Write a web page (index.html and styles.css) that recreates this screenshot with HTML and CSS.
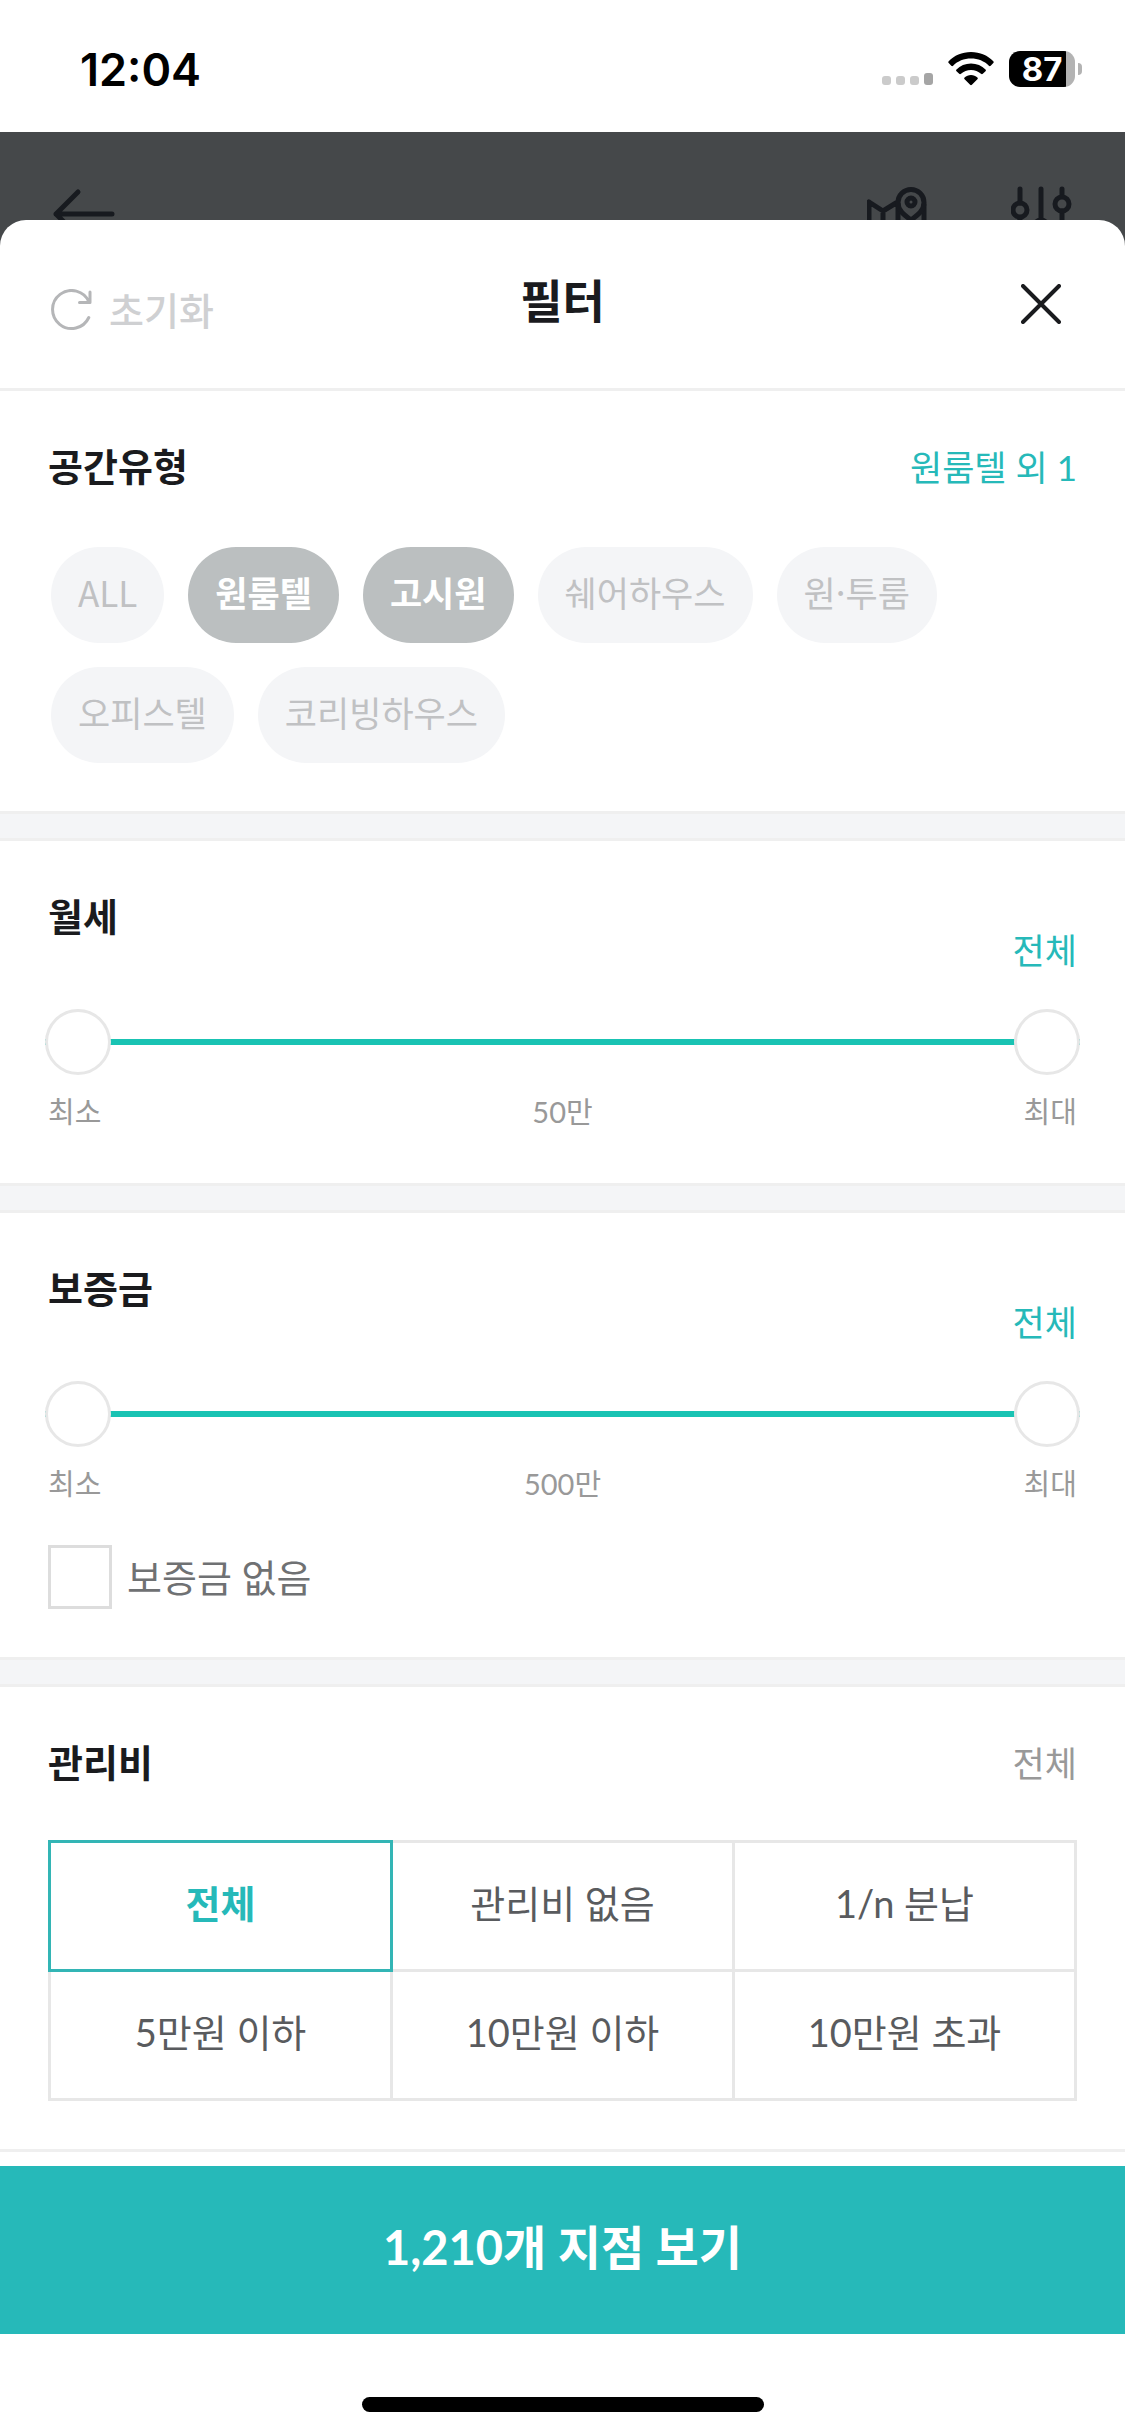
FILE: index.html
```
<!DOCTYPE html>
<html lang="ko">
<head>
  <meta charset="UTF-8" />
  <meta name="viewport" content="width=device-width, initial-scale=1.0"/>
  <title>필터</title>
  <link rel="stylesheet" href="styles.css">
</head>

<body>

  <!-- Phone status bar -->
  <div class="status-bar">
    <span class="time">12:04</span>
    <div class="status-icons">
      <svg class="signal" width="51" height="12" viewBox="0 0 51 12">
        <g fill="#cbcbcb">
          <rect x="0" y="3" width="9" height="9" rx="3"/>
          <rect x="14" y="3" width="9" height="9" rx="3"/>
          <rect x="28" y="3" width="9" height="9" rx="3"/>
        </g>
        <rect x="42" y="0" width="9" height="12" rx="3" fill="#a5a5a5"/>
      </svg>
      <svg class="wifi" width="46" height="34" viewBox="0 0 46 34">
        <path d="M23 0C32 0 40 3.500 45.300 9.300c.6.6.6 1.200 0 1.800l-2.600 2.600c-.6.6-1.200.6-1.800 0C36.300 9.200 30 6.600 23 6.600S9.700 9.200 5.100 13.700c-.6.6-1.200.6-1.800 0L.7 11.100c-.6-.6-.6-1.200 0-1.800C6 3.500 14 0 23 0z"/>
        <path d="M23 11.600c5.700 0 10.800 2.200 14.500 5.800.6.6.6 1.200 0 1.800l-2.700 2.600c-.6.6-1.200.5-1.800 0-2.700-2.400-6.100-3.800-10-3.800s-7.300 1.400-10 3.800c-.6.5-1.200.6-1.800 0l-2.700-2.600c-.6-.6-.6-1.200 0-1.800 3.700-3.600 8.800-5.800 14.500-5.800z"/>
        <path d="M23 23.100c2.500 0 4.700.9 6.400 2.400.6.6.6 1.200 0 1.800l-5.500 5.500c-.6.6-1.200.6-1.800 0l-5.500-5.500c-.6-.6-.6-1.200 0-1.800 1.700-1.500 3.900-2.400 6.400-2.400z"/>
      </svg>
      <div class="battery">
        <span class="battery-level">87</span>
        <span class="battery-nub"></span>
      </div>
    </div>
  </div>

  <!-- Page behind the sheet, dimmed -->
  <div class="app-bar">
    <svg class="icon-back" width="64" height="52" viewBox="0 0 64 52">
      <path d="M26 4L4 26l22 22M4 26h56"/>
    </svg>
    <div class="app-actions">
      <svg width="62" height="58" viewBox="0 0 62 58">
        <path d="M2 17v34l14 5 14-5 13 5 14-5V20M2 17l14 9 13-8M16 26v29M31 19v32M44 38v18"/>
        <path d="M44 35C36 29 31 25 31 17.500a13 13 0 0 1 26 0c0 7.500-5 11.500-13 17.500z"/>
        <circle cx="44" cy="17" r="4"/>
      </svg>
      <svg width="62" height="58" viewBox="0 0 62 58">
        <path d="M9 4v14M9 33v22M30 4v31M30 49v6M51 4v7M51 26v29"/>
        <circle cx="9" cy="25" r="7"/>
        <circle cx="30" cy="42" r="7"/>
        <circle cx="51" cy="19" r="7"/>
      </svg>
    </div>
  </div>

  <main class="sheet">
    <header class="sheet-header">
      <button class="reset" type="button">
        <svg width="42" height="42" viewBox="0 0 42 42">
          <path d="M37.800 28.500A19 19 0 1 1 38 13M39 3v10.500H28.500"/>
        </svg>
        초기화
      </button>
      <h1>필터</h1>
      <button class="close" type="button" aria-label="닫기">
        <svg width="40" height="40" viewBox="0 0 40 40">
          <path d="M2 2l36 36M38 2L2 38"/>
        </svg>
      </button>
    </header>

    <section>
      <div class="section-head">
        <h2>공간유형</h2>
        <span class="value">원룸텔 외 1</span>
      </div>
      <div class="chips">
        <button class="chip" type="button">ALL</button>
        <button class="chip active" type="button">원룸텔</button>
        <button class="chip active" type="button">고시원</button>
        <button class="chip" type="button">쉐어하우스</button>
        <button class="chip" type="button">원·투룸</button>
        <button class="chip" type="button">오피스텔</button>
        <button class="chip" type="button">코리빙하우스</button>
      </div>
    </section>

    <section>
      <div class="section-head range-head">
        <h2>월세</h2>
        <span class="value">전체</span>
      </div>
      <div class="range">
        <input type="range" min="0" max="100" value="0" aria-label="월세 최소">
        <input type="range" min="0" max="100" value="100" aria-label="월세 최대">
      </div>
      <div class="range-labels">
        <span>최소</span>
        <span>50만</span>
        <span>최대</span>
      </div>
    </section>

    <section>
      <div class="section-head range-head">
        <h2>보증금</h2>
        <span class="value">전체</span>
      </div>
      <div class="range">
        <input type="range" min="0" max="1000" value="0" aria-label="보증금 최소">
        <input type="range" min="0" max="1000" value="1000" aria-label="보증금 최대">
      </div>
      <div class="range-labels">
        <span>최소</span>
        <span>500만</span>
        <span>최대</span>
      </div>
      <label class="check">
        <input type="checkbox">
        보증금 없음
      </label>
    </section>

    <section>
      <div class="section-head">
        <h2>관리비</h2>
        <span class="value muted">전체</span>
      </div>
      <div class="fees">
        <button class="fee active" type="button">전체</button>
        <button class="fee" type="button">관리비 없음</button>
        <button class="fee" type="button">1/n 분납</button>
        <button class="fee" type="button">5만원 이하</button>
        <button class="fee" type="button">10만원 이하</button>
        <button class="fee" type="button">10만원 초과</button>
      </div>
    </section>
  </main>

  <button class="submit" type="button">1,210개 지점 보기</button>

  <div class="home-indicator"></div>

</body>
</html>
```
FILE: styles.css
```
* {
  margin: 0;
  padding: 0;
  box-sizing: border-box;
}

body {
  font-family: "Lato", "Noto Sans CJK KR", sans-serif;
  background-color: #fff;
  color: #1a1b1e;
}

button {
  font-family: inherit;
  border: none;
  background: none;
  cursor: pointer;
}

svg {
  display: block;
}

/* Status bar */
.status-bar {
  display: flex;
  justify-content: space-between;
  align-items: center;
  height: 132px;
  padding: 6px 43px 0 80px;
  font-family: "Inter", sans-serif;
  color: #000;
}

.time {
  font-size: 45px;
  font-weight: 600;
}

.status-icons {
  display: flex;
  align-items: center;
}

.signal {
  margin-top: 20px;
  margin-right: 15px;
}

.wifi {
  margin-right: 15px;
}

.battery {
  display: flex;
  align-items: center;
  gap: 3px;
}

.battery-level {
  width: 66px;
  height: 36px;
  border-radius: 11px;
  background: linear-gradient(to right, #000 57px, #b3b3b3 57px);
  color: #fff;
  font-size: 33px;
  font-weight: 700;
  line-height: 36px;
  text-align: center;
}

.battery-nub {
  width: 4px;
  height: 12px;
  border-radius: 0 6px 6px 0;
  background-color: #b3b3b3;
}

/* Dimmed app bar */
.app-bar {
  display: flex;
  justify-content: space-between;
  align-items: center;
  height: 164px;
  padding: 0 52px;
  background-color: #45484a;
}

.app-bar svg {
  fill: none;
  stroke: #171a1f;
  stroke-width: 5;
  stroke-linecap: round;
  stroke-linejoin: round;
}

.app-actions {
  display: flex;
  gap: 82px;
}

/* Filter sheet */
.sheet {
  position: relative;
  margin-top: -76px;
  border-radius: 26px 26px 0 0;
  background-color: #fff;
}

.sheet-header {
  display: grid;
  grid-template-columns: 1fr auto 1fr;
  align-items: center;
  height: 171px;
  padding: 0 48px;
  border-bottom: 3px solid #efefef;
}

.sheet-header h1 {
  padding-bottom: 6px;
  font-size: 46px;
  font-weight: 700;
  line-height: 64px;
}

.reset {
  display: flex;
  align-items: center;
  gap: 16px;
  padding: 12px 0 0 3px;
  color: #cfd0d2;
  font-size: 38px;
  font-weight: 500;
  line-height: 56px;
}

.reset svg {
  fill: none;
  stroke: #b5b6b8;
  stroke-width: 3;
  stroke-linecap: round;
  stroke-linejoin: round;
}

.close {
  justify-self: end;
  padding: 0 16px;
}

.close svg {
  fill: none;
  stroke: #1a1b1e;
  stroke-width: 4;
  stroke-linecap: round;
}

section {
  padding: 48px 48px;
  border-bottom: 3px solid #efefef;
}

/* Grey band between sections, with a hairline on both edges */
section + section {
  padding-top: 51px;
  border-top: 24px solid #f4f5f7;
  box-shadow: inset 0 3px #efefef;
}

.section-head {
  display: flex;
  justify-content: space-between;
  align-items: flex-start;
}

.section-head h2 {
  font-size: 38px;
  font-weight: 700;
  line-height: 54px;
}

.value {
  color: #26b9b9;
  font-size: 35px;
  line-height: 56px;
}

.value.muted {
  color: #999;
}

/* Space type chips */
.chips {
  display: flex;
  flex-wrap: wrap;
  gap: 24px;
  margin-top: 52px;
  padding: 0 3px;
}

.chip {
  height: 96px;
  padding: 0 27px 8px;
  border-radius: 48px;
  background-color: #f4f5f7;
  color: #c0c1c3;
  font-family: "Noto Sans CJK KR", sans-serif;
  font-size: 35px;
}

.chip.active {
  background-color: #bbbfc0;
  color: #fff;
  font-weight: 700;
}

/* Price sliders */
.range-head {
  height: 120px;
}

.range-head .value {
  margin-top: 33px;
}

.range {
  display: grid;
  align-items: center;
  margin: 0 -3px;
}

.range::before {
  content: "";
  grid-area: 1 / 1;
  height: 6px;
  background-color: #19c3b3;
}

.range input {
  grid-area: 1 / 1;
  position: relative;
  width: 100%;
  height: 66px;
  appearance: none;
  background: none;
  pointer-events: none;
}

.range input::-webkit-slider-thumb {
  appearance: none;
  width: 66px;
  height: 66px;
  border: 3px solid #e7e7e7;
  border-radius: 50%;
  background-color: #fff;
  pointer-events: auto;
  cursor: pointer;
}

.range-labels {
  display: flex;
  justify-content: space-between;
  margin-top: 14px;
  color: #999;
  font-size: 29px;
  line-height: 46px;
}

.check {
  display: flex;
  align-items: center;
  gap: 15px;
  margin-top: 38px;
  color: #6f7173;
  font-size: 38px;
  line-height: 56px;
}

.check input {
  width: 64px;
  height: 64px;
  appearance: none;
  border: 3px solid #ddd;
  background-color: #fff;
}

/* Maintenance fee grid, neighbours share a border */
.fees {
  display: grid;
  grid-template-columns: repeat(3, 1fr);
  margin-top: 49px;
  padding: 0 3px 3px 0;
}

.fee {
  height: 132px;
  margin: 0 -3px -3px 0;
  padding-bottom: 10px;
  border: 3px solid #e7e7e7;
  color: #595b5e;
  font-size: 38px;
}

.fee.active {
  position: relative;
  border-color: #33b5b5;
  color: #26b9b9;
  font-weight: 700;
}

.submit {
  display: block;
  width: 100%;
  height: 168px;
  margin-top: 14px;
  padding-bottom: 12px;
  background-color: #26b9b9;
  color: #fff;
  font-size: 47px;
  font-weight: 700;
}

.home-indicator {
  width: 402px;
  height: 15px;
  margin: 63px auto 24px;
  border-radius: 8px;
  background-color: #000;
}
```
